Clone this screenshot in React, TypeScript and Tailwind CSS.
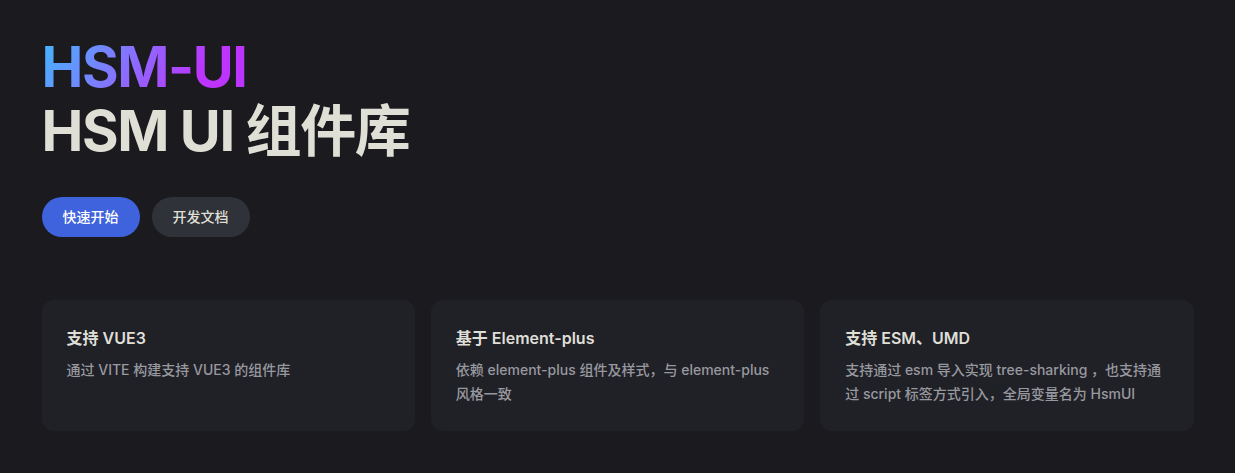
import React from "react";

const features = [
  { title: "支持 VUE3", details: "通过 VITE 构建支持 VUE3 的组件库" },
  { title: "基于 Element-plus", details: "依赖 element-plus 组件及样式，与 element-plus 风格一致" },
  {
    title: "支持 ESM、UMD",
    details: "支持通过 esm 导入实现 tree-sharking ，也支持通过 script 标签方式引入，全局变量名为 HsmUI",
  },
];

export default function App() {
  return (
    <div
      className="min-h-[473px] w-full bg-[#1b1b1f] text-[#dfdfd6] antialiased"
      style={{ fontFamily: 'Inter, "Noto Sans CJK SC", sans-serif' }}
    >
      <div className="mx-auto max-w-[1152px] pt-[35px]">
        <h1 className="text-[56px] font-bold leading-[64px] tracking-[-1.4px]">
          <span className="inline-block bg-[linear-gradient(120deg,#41b8ff_0%,#7d7cff_35%,#bd34fe_75%)] bg-clip-text text-transparent">
            HSM-UI
          </span>
          <br />
          <span className="text-[#dfdfd6]">HSM UI 组件库</span>
        </h1>
        <div className="mt-[34px] flex gap-3">
          <a className="flex h-10 items-center rounded-full bg-[#3e63dd] px-[21px] text-sm font-medium text-white">
            快速开始
          </a>
          <a className="flex h-10 items-center rounded-full bg-[#2f3238] px-[21px] text-sm font-medium text-[#dfdfd6]">
            开发文档
          </a>
        </div>
        <div className="mt-[63px] grid grid-cols-3 gap-4">
          {features.map((f) => (
            <div key={f.title} className="h-[131px] rounded-xl bg-[#202127] px-[25px] pt-[26px]">
              <h2 className="text-base font-semibold leading-6 text-[#dfdfd6]">{f.title}</h2>
              <p className="pt-2 text-sm font-medium leading-6 text-[#98989f]">{f.details}</p>
            </div>
          ))}
        </div>
      </div>
    </div>
  );
}
